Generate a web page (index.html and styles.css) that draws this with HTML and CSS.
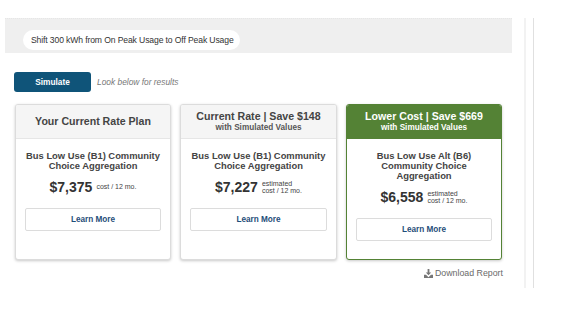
FILE: index.html
```html
<!DOCTYPE html>
<html>
<head>
<meta charset="utf-8">
<link rel="stylesheet" href="styles.css">
</head>
<body>
<div class="page">
  <div class="main">
    <div class="band">
      <span class="pill">Shift 300 kWh from On Peak Usage to Off Peak Usage</span>
    </div>
    <div class="actions">
      <button class="btn-sim">Simulate</button>
      <span class="hint">Look below for results</span>
    </div>
    <div class="cards">
      <div class="card">
        <div class="card-head">
          <div class="head-title">Your Current Rate Plan</div>
        </div>
        <div class="card-body">
          <div class="plan">Bus Low Use (B1) Community<br>Choice Aggregation</div>
          <div class="price-row">
            <span class="amount">$7,375</span>
            <span class="note">cost / 12 mo.</span>
          </div>
          <div class="learn">Learn More</div>
        </div>
      </div>
      <div class="card">
        <div class="card-head">
          <div class="head-title">Current Rate | Save $148</div>
          <div class="head-sub">with Simulated Values</div>
        </div>
        <div class="card-body">
          <div class="plan">Bus Low Use (B1) Community<br>Choice Aggregation</div>
          <div class="price-row">
            <span class="amount">$7,227</span>
            <span class="note">estimated<br>cost / 12 mo.</span>
          </div>
          <div class="learn">Learn More</div>
        </div>
      </div>
      <div class="card card-best">
        <div class="card-head">
          <div class="head-title">Lower Cost | Save $669</div>
          <div class="head-sub">with Simulated Values</div>
        </div>
        <div class="card-body">
          <div class="plan">Bus Low Use Alt (B6)<br>Community Choice<br>Aggregation</div>
          <div class="price-row">
            <span class="amount">$6,558</span>
            <span class="note">estimated<br>cost / 12 mo.</span>
          </div>
          <div class="learn">Learn More</div>
        </div>
      </div>
    </div>
    <div class="download">
      <svg class="dl-icon" width="9" height="9" viewBox="0 0 10 10">
        <path d="M4 0h2v4h2L5 7 2 4h2z" fill="#777"/>
        <path d="M0 6.5h2.2L5 9.2 7.8 6.5H10V10H0z" fill="#777"/>
      </svg>
      <span>Download Report</span>
    </div>
  </div>
  <div class="rail"></div>
</div>
</body>
</html>
```
FILE: styles.css
```css
html, body {
  margin: 0;
  padding: 0;
  background: #ffffff;
}

body {
  font-family: "Liberation Sans", Arial, sans-serif;
  color: #333;
}

.page {
  display: flex;
  align-items: flex-start;
  padding-top: 18px;
}

.main {
  width: 507px;
  margin-left: 5px;
}

.band {
  background: #efefef;
  height: 35px;
  box-sizing: border-box;
  padding: 10px 0 0 18px;
  border-top: 1px dotted #e6e6e6;
}

.pill {
  display: inline-block;
  background: #ffffff;
  height: 20px;
  line-height: 20px;
  border-radius: 10px;
  padding: 0 6px 0 8px;
  font-size: 8.6px;
  letter-spacing: -0.12px;
  color: #333;
}

.actions {
  display: flex;
  align-items: center;
  gap: 6px;
  margin: 19px 0 0 9px;
}

.btn-sim {
  width: 77px;
  height: 20px;
  border: none;
  border-radius: 3px;
  background: #0f5479;
  color: #ffffff;
  font-family: "Liberation Sans", Arial, sans-serif;
  font-weight: bold;
  font-size: 8.3px;
  padding: 0;
}

.hint {
  font-style: italic;
  font-size: 8.4px;
  color: #777;
}

.cards {
  display: grid;
  grid-template-columns: 156px 157px 156px;
  column-gap: 9px;
  margin: 12px 0 0 10px;
}

.card {
  display: flex;
  flex-direction: column;
  background: #ffffff;
  border: 1px solid #dcdcdc;
  border-radius: 3px;
  box-shadow: 0 1px 3px rgba(0, 0, 0, 0.22);
  height: 156px;
  box-sizing: border-box;
}

.card-head {
  height: 34px;
  box-sizing: border-box;
  background: #f5f5f5;
  border-bottom: 1px solid #e6e6e6;
  display: flex;
  flex-direction: column;
  justify-content: center;
  align-items: center;
  border-radius: 2px 2px 0 0;
}

.head-title {
  font-weight: bold;
  font-size: 10.6px;
  line-height: 13px;
  color: #444;
}

.head-sub {
  font-weight: bold;
  font-size: 8.2px;
  line-height: 10px;
  color: #555;
}

.card-best {
  border-color: #548235;
}

.card-best .card-head {
  background: #548235;
  border-bottom-color: #548235;
}

.card-best .head-title,
.card-best .head-sub {
  color: #ffffff;
}

.card-body {
  padding: 12px 9px 0;
  text-align: center;
}

.plan {
  font-weight: bold;
  font-size: 9.4px;
  line-height: 10px;
  color: #444;
}

.price-row {
  display: flex;
  justify-content: center;
  align-items: center;
  gap: 4px;
  margin-top: 8px;
  height: 16px;
}

.amount {
  font-weight: bold;
  font-size: 14px;
  color: #333;
}

.note {
  font-size: 7px;
  line-height: 7.5px;
  color: #444;
  text-align: left;
}

.learn {
  margin-top: 13px;
  height: 23px;
  box-sizing: border-box;
  border: 1px solid #dcdcdc;
  border-radius: 2px;
  display: flex;
  align-items: center;
  justify-content: center;
  font-weight: bold;
  font-size: 8.2px;
  color: #1f4e79;
}

.download {
  display: flex;
  justify-content: flex-end;
  align-items: center;
  gap: 2px;
  width: 498px;
  margin-top: 8px;
  font-size: 8.8px;
  color: #6a6a6a;
}

.dl-icon {
  display: block;
}

.rail {
  margin-left: 12px;
  width: 7px;
  height: 270px;
  border-left: 2px solid #f2f2f2;
  border-right: 1px solid #e0e0e0;
}
```
